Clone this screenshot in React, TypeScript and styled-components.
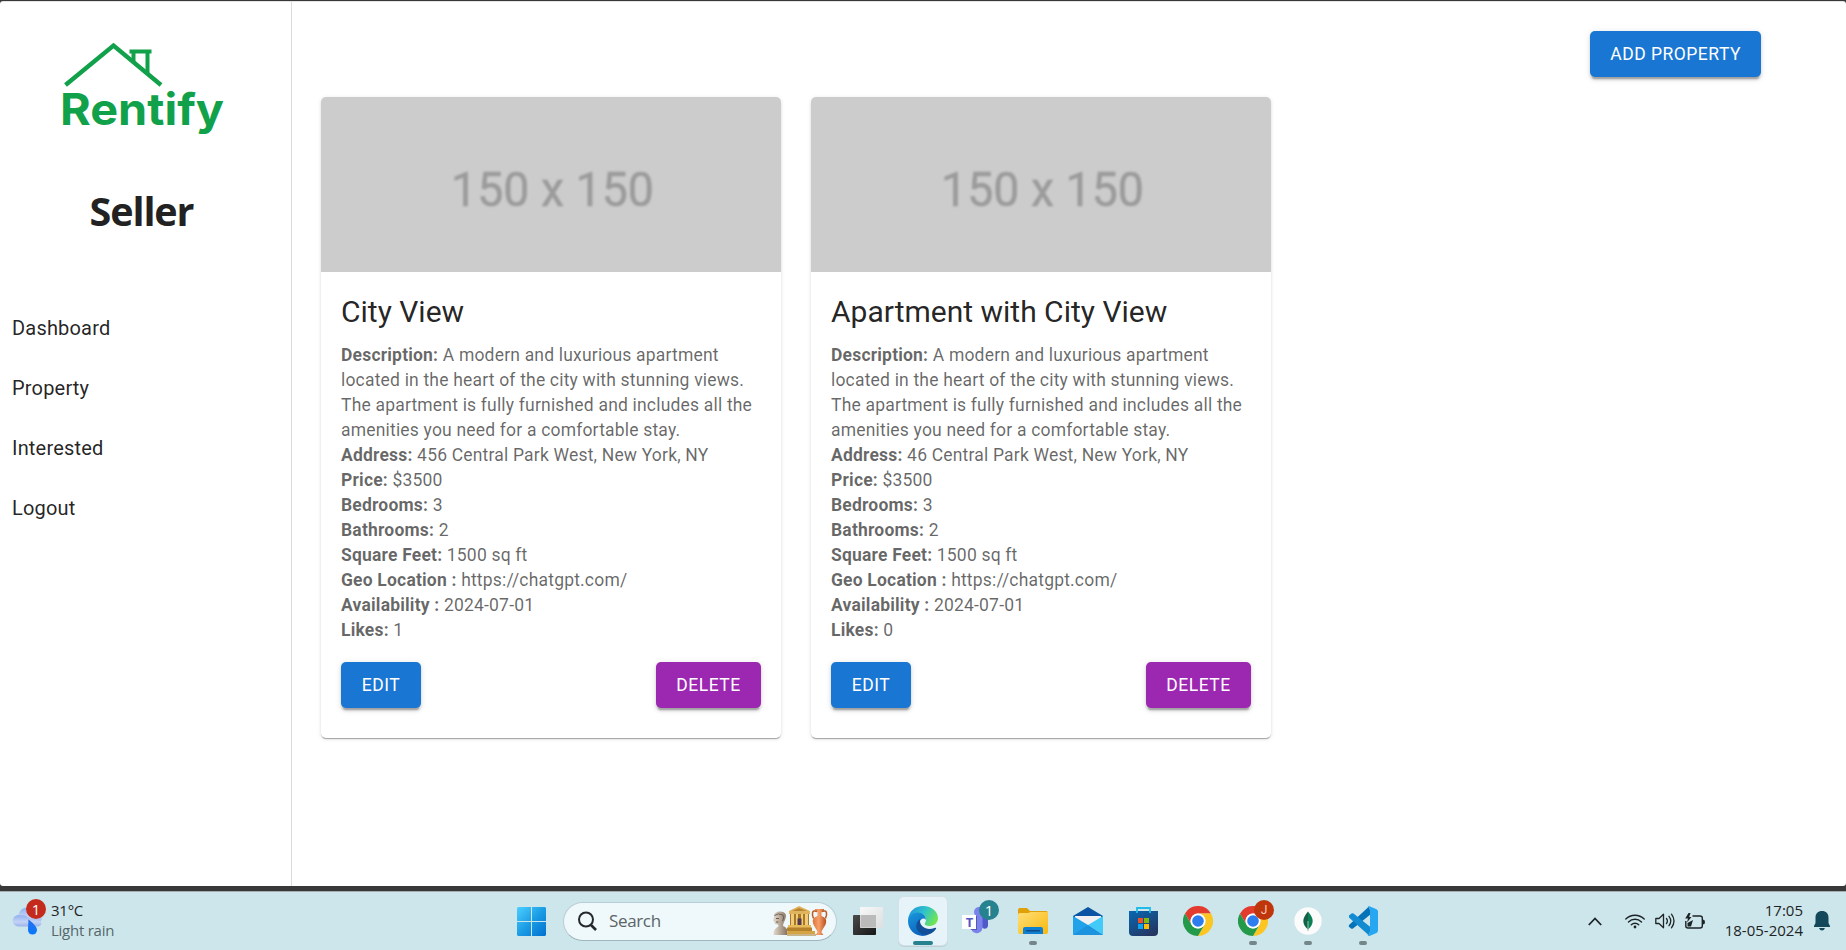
import React from 'react';
import styled, { createGlobalStyle } from 'styled-components';

const GlobalStyle = createGlobalStyle`
  * { box-sizing: border-box; }
  html, body { margin: 0; padding: 0; }
  body {
    width: 1846px;
    height: 950px;
    overflow: hidden;
    background: #383838;
    font-family: Roboto, "Liberation Sans", sans-serif;
    color: rgba(0, 0, 0, 0.87);
  }
`;

const Screen = styled.div`
  display: flex;
  flex-direction: column;
  height: 950px;
  padding-top: 1px;
`;

const Page = styled.div`
  display: flex;
  height: 885px;
  margin-bottom: 5px;
  background: #fff;
  border-top: 1px solid #e6e3e6;
  border-radius: 3px;
  overflow: hidden;
`;

const Sidebar = styled.aside`
  display: flex;
  flex-direction: column;
  width: 292px;
  border-right: 1px solid #dcdcdc;
`;

const Brand = styled.div`
  padding: 38px 0 0 58px;
  height: 138px;
`;

const Role = styled.h1`
  margin: 41px 0 0;
  width: 283px;
  text-align: center;
  font: 700 39.5px/60px "Open Sans", "Noto Sans", sans-serif;
  letter-spacing: -1.1px;
  color: #222;
`;

const Nav = styled.nav`
  display: flex;
  flex-direction: column;
  margin-top: 57px;
`;

const NavItem = styled.a`
  padding: 15px 12px;
  font-size: 20px;
  line-height: 30px;
  letter-spacing: 0.00938em;
`;

const Main = styled.main`
  flex: 1;
  display: flex;
  flex-direction: column;
  padding: 29px 85px 0 29px;
`;

const Toolbar = styled.div`
  display: flex;
  justify-content: flex-end;
  margin-bottom: 20px;
`;

const Button = styled.button<{ $tone?: 'primary' | 'secondary' }>`
  height: 46px;
  min-width: ${(p) => (p.$tone === 'secondary' ? 105 : 80)}px;
  padding: 0 20px;
  border: 0;
  border-radius: 5px;
  background: ${(p) => (p.$tone === 'secondary' ? '#9c27b0' : '#1976d2')};
  color: #fff;
  font: 400 17.5px/30.6px Roboto, sans-serif;
  letter-spacing: 0.02857em;
  text-transform: uppercase;
  white-space: nowrap;
  box-shadow: 0 3.75px 1.25px -2.5px rgba(0, 0, 0, 0.2), 0 2.5px 2.5px rgba(0, 0, 0, 0.14),
    0 1.25px 6.25px rgba(0, 0, 0, 0.12);
`;

const CardList = styled.div`
  display: flex;
  gap: 30px;
`;

const Card = styled.article`
  width: 460px;
  border-radius: 5px;
  overflow: hidden;
  background: #fff;
  box-shadow: 0 2px 1px -1px rgba(0, 0, 0, 0.2), 0 1px 1px rgba(0, 0, 0, 0.14),
    0 1px 4px rgba(0, 0, 0, 0.12);
`;

const CardBody = styled.div`
  padding: 20px 20px 30px;
`;

const CardTitle = styled.h2`
  margin: 0 0 10.5px;
  font-size: 30px;
  line-height: 40px;
  font-weight: 400;
`;

const Details = styled.div`
  font-size: 17.5px;
  line-height: 25.025px;
  letter-spacing: 0.01071em;
  color: rgba(0, 0, 0, 0.6);
`;

const Field = styled.div`
  b { font-weight: 700; }
`;

const Actions = styled.div`
  display: flex;
  justify-content: space-between;
  margin-top: 19px;
`;

const Taskbar = styled.footer`
  display: flex;
  align-items: center;
  height: 59px;
  padding: 0 16px 0 11px;
  border-top: 1px solid #a4aeb1;
  background: #cde6eb;
  font: 400 15px/20px "Open Sans", "Noto Sans", sans-serif;
  color: #1d2426;
`;

const Weather = styled.div`
  display: flex;
  align-items: center;
  gap: 5px;
  width: 496px;
`;

const TwoLines = styled.div<{ $end?: boolean }>`
  display: flex;
  flex-direction: column;
  padding-bottom: 2px;
  text-align: ${(p) => (p.$end ? 'right' : 'left')};
  letter-spacing: ${(p) => (p.$end ? '0' : '-0.25px')};
  white-space: nowrap;
`;

const Muted = styled.span`
  color: #56666a;
`;

const Apps = styled.div`
  display: flex;
  align-items: center;
  gap: 7px;
`;

const Tile = styled.div<{ $active?: boolean }>`
  position: relative;
  display: flex;
  align-items: center;
  justify-content: center;
  width: 48px;
  height: 48px;
  border-radius: 5px;
  background: ${(p) => (p.$active ? '#e6f3f8' : 'transparent')};
  box-shadow: ${(p) => (p.$active ? '0 0 0 1px #d3e2e8, 0 1px 0 1px #bdd0d6' : 'none')};
`;

const Indicator = styled.i<{ $active?: boolean }>`
  position: absolute;
  left: 50%;
  bottom: 0;
  width: ${(p) => (p.$active ? 20 : 8)}px;
  height: 4px;
  transform: translateX(-50%);
  border-radius: 2px;
  background: ${(p) => (p.$active ? '#26828f' : '#75868a')};
`;

const Badge = styled.span<{ $color: string; $left: number; $top: number; $small?: boolean }>`
  position: absolute;
  left: ${(p) => p.$left}px;
  top: ${(p) => p.$top}px;
  width: 20px;
  height: 20px;
  border-radius: 50%;
  background: ${(p) => p.$color};
  color: ${(p) => (p.$small ? '#f6c9b4' : '#fff')};
  font-family: ${(p) => (p.$small ? 'Roboto' : '"Open Sans"')}, sans-serif;
  font-size: ${(p) => (p.$small ? 12 : 15)}px;
  line-height: 20px;
  text-align: center;
`;

const WeatherIcon = styled.div`
  position: relative;
  height: 32px;
  width: 35px;
`;

const SearchBox = styled.div`
  display: flex;
  align-items: center;
  width: 274px;
  height: 39px;
  margin-left: 1px;
  padding: 0 8px 0 14px;
  border: 1px solid #b9ced5;
  border-bottom-color: #9fb6bd;
  border-radius: 20px;
  background: #eff8fa;
  color: #5b6467;
  font-size: 17px;
  letter-spacing: -0.35px;
`;

const SearchLabel = styled.span`
  flex: 1;
  padding-left: 12px;
`;

const Tray = styled.div`
  display: flex;
  align-items: center;
  margin-left: auto;
`;

const TrayIcons = styled.div`
  display: flex;
  align-items: center;
  gap: 10px;
  margin: 0 20px 0 23px;
`;

const Bell = styled.div`
  display: flex;
  margin-left: 11px;
`;

const Logo = () => (
  <svg width="170" height="98" viewBox="58 40 170 98">
    <g fill="none" stroke="#12a14b" strokeWidth="4.4">
      <path d="M65.500 85 113.500 45.500 161 85" />
      <path d="M129.500 51.500H151.500M133.500 52V62M147.500 52V74" strokeWidth="4" />
    </g>
    <text x="60" y="124.500" fill="#12a14b" fontFamily="Inter" fontWeight="700" fontSize="44.500" textLength="164" lengthAdjust="spacingAndGlyphs">Rentify</text>
  </svg>
);

const Placeholder = () => (
  <svg width="460" height="175" viewBox="0 0 460 175" display="block">
    <rect width="460" height="175" fill="#ccc" />
    <text x="130" y="108.500" fill="#9b9b9b" fontFamily="Roboto" fontWeight="400" stroke="#9b9b9b" strokeWidth=".5" fontSize="47.500" textLength="203" lengthAdjust="spacingAndGlyphs" style={{ filter: 'blur(1px)' }}>150 x 150</text>
  </svg>
);

const CloudRain = () => (
  <svg width="32" height="32" viewBox="0 0 32 32">
    <defs>
      <linearGradient id="cloud" x1="0" y1="0" x2="0" y2="1"><stop stopColor="#8fb0f0" /><stop offset=".6" stopColor="#c4d3f6" /><stop offset="1" stopColor="#9bb2ec" /></linearGradient>
      <linearGradient id="drop" x1="0" y1="0" x2="0" y2="1"><stop stopColor="#2a6fe8" /><stop offset="1" stopColor="#0878ff" /></linearGradient>
    </defs>
    <path d="M9 16A8 8 0 0 1 23 6a6 6 0 0 1 4 12z" fill="url(#cloud)" />
    <path d="M7 21.500a5.800 5.800 0 1 1 3-11 8 8 0 0 1 9 4.500h8a4.500 4.500 0 0 1 3.500 3q-.5 3.500-4 3.500z" fill="url(#cloud)" />
    <path d="M17.500 14.500c0 0 8.500 6 8.500 10.500a4.500 4.500 0 0 1-9 0c0-3 .5-10.500.5-10.500z" fill="url(#drop)" />
  </svg>
);

const WindowsIcon = () => (
  <svg width="29" height="29" viewBox="0 0 29 29">
    <defs><linearGradient id="win" x1="0" y1="0" x2="1" y2="1"><stop stopColor="#4dcfff" /><stop offset=".5" stopColor="#1b9de5" /><stop offset="1" stopColor="#0070cf" /></linearGradient></defs>
    <path d="M1 0H14V14H0V1ZM15 0H28L29 1V14H15ZM0 15H14V29H1L0 28ZM15 15H29V28L28 29H15Z" fill="url(#win)" />
  </svg>
);

const SearchIcon = () => (
  <svg width="19" height="20" viewBox="0 0 19 20" fill="none" stroke="#25292b" strokeWidth="2">
    <circle cx="8" cy="8.500" r="7" /><path d="M12.500 13.500 18 19" strokeWidth="2.600" />
  </svg>
);

const Monuments = () => (
  <svg width="56" height="31" viewBox="0 0 56 31">
    <defs>
      <linearGradient id="vase"><stop stopColor="#dd7739" /><stop offset=".45" stopColor="#f7a06c" /><stop offset="1" stopColor="#b84f1c" /></linearGradient>
      <linearGradient id="bust"><stop stopColor="#e6ddd0" /><stop offset="1" stopColor="#85715d" /></linearGradient>
    </defs>
    <path d="M2 11C1 7 5 5.500 8 5.500c5 0 7 3 5.500 7C13 15 11 17 11 20c3 1 5 3 4.500 9H1.500c0-5 2-7 5-8.500L6 18.500 3 18 2.500 16 1 14.500z" fill="url(#bust)" />
    <path d="M2.500 9.500q3.500-3 8.500-.5 1.500 3-.5 6M4 12.500h3M4 16h2.500" stroke="#6b5f55" fill="none" />
    <path d="M27 0 38 5V8H17V5z" fill="#e0b45c" /><path d="M20 5 27 2l8 3z" fill="#b98532" />
    <path d="M18 8H37V19H18z" fill="#a87726" />
    <path d="M19 8h3v11h-3zM24 8h2v11h-2zM29 8h2v11h-2zM33 8h3v11h-3z" fill="#f0cb78" />
    <path d="M25.500 12.500h4V19h-4z" fill="#563a4c" />
    <path d="M16 19h23v3H16z" fill="#e7bb5a" /><path d="M15 21.500h25V25H15z" fill="#b4822b" /><path d="M16 25h27v3H15z" fill="#d6a445" /><path d="M15 28h29v2H15z" fill="#c9b58a" />
    <path d="M43 3h9v1.500l-2.500 1.500V10c3 1 5.500 3 4.500 7-1 4-4.500 7-4.500 9.500l2 2.500h-8l2-2.500C45.500 24 42 21 41 17c-1-4 1.500-6 4.500-7V6L43 4.500z" fill="url(#vase)" />
    <path d="M45 5.500c-5-2-5.500 2-3.500 7M50 5.500c5-2 5.500 2 3.500 7" fill="none" stroke="#bd5a25" strokeWidth="1.500" />
  </svg>
);

const TaskViewIcon = () => (
  <svg width="30" height="29" viewBox="0 0 30 29">
    <defs>
      <linearGradient id="tvd" x1="0" y1="0" x2="1" y2="1"><stop stopColor="#4b4b4b" /><stop offset="1" stopColor="#161616" /></linearGradient>
      <linearGradient id="tvl" x1="0" y1="0" x2="1" y2="1"><stop stopColor="#f8f8f8" /><stop offset="1" stopColor="#dcdedf" /></linearGradient>
    </defs>
    <rect y="8" width="23" height="20" rx="1" fill="url(#tvd)" />
    <rect x="7" y="0" width="23" height="21" rx="1" fill="url(#tvl)" />
    <path d="M7.500 8H23V20.500H7.500z" fill="#bbb" />
  </svg>
);

const EdgeIcon = () => (
  <svg width="30" height="30" viewBox="0 0 30 30">
    <defs>
      <linearGradient id="eg" x1="0" y1=".2" x2="1" y2=".6"><stop stopColor="#2291dc" /><stop offset=".5" stopColor="#2fc3cb" /><stop offset="1" stopColor="#72e650" /></linearGradient>
      <linearGradient id="eb" x1="0" y1="0" x2=".5" y2="1"><stop stopColor="#1a99dc" /><stop offset="1" stopColor="#0c62bd" /></linearGradient>
    </defs>
    <path d="M0 14C1 5 7 0 15 0c9 0 15 6 15 12 0 5-4 8-8 8-4 0-6-1-5-3 2-3 1-7-3-9C9 6 3 9 0 14z" fill="url(#eg)" />
    <path d="M0 15c0-5 5-8.500 9.500-8.500 5 0 8.500 3.500 8.500 7.500-1.500-3-6-1.500-6.500 3C11 23 16 29 21 28.500 11 33 0 26 0 15z" fill="url(#eb)" />
    <path d="M12 13c-4 3-5 8-2 12 4 5 12 6 18-2 .5-1-.5-1.500-1.500-1C19 25 11 21 12 13z" fill="#124f99" />
  </svg>
);

const TeamsIcon = () => (
  <svg width="34" height="32" viewBox="0 0 34 32">
    <circle cx="18" cy="7" r="5" fill="#7b83eb" />
    <path d="M20 12h7v8c0 5-6 5-7 0z" fill="#5059c9" />
    <path d="M11 11h10.500v12a6 6 0 0 1-10.500 3z" fill="#7b83eb" />
    <path d="M4 11h12v14H10z" fill="#484ea9" opacity=".8" />
    <rect x="1" y="10" width="14" height="14" fill="#fff" />
    <text x="8.500" y="21.500" fill="#5558c4" fontFamily="Open Sans" fontWeight="700" fontSize="13" textAnchor="middle">T</text>
  </svg>
);

const FolderIcon = () => (
  <svg width="30" height="27" viewBox="0 0 30 27">
    <defs><linearGradient id="fold" x1="0" y1="0" x2="1" y2="1"><stop stopColor="#ffdf79" /><stop offset="1" stopColor="#f9b80c" /></linearGradient></defs>
    <path d="M0 2Q0 0 2 0H9L12 3H28q2 0 2 2V8H0z" fill="#dfa009" />
    <path d="M0 7Q0 5 2 5H10L13 4H30V24q0 2-2 2H2q-2 0-2-2z" fill="url(#fold)" />
    <path d="M5 26V21q0-2 2-2H23q2 0 2 2v5z" fill="#0f7fd2" /><rect x="8" y="22" width="14" height="1.500" rx=".7" fill="#104c83" />
  </svg>
);

const MailIcon = () => (
  <svg width="30" height="28" viewBox="0 0 30 28">
    <path d="M0 9 15 0 30 9V14H0z" fill="#0b54a4" />
    <path d="M2 9H28V20H2z" fill="#f1f1f3" />
    <path d="M0 9 15 18 30 28H1q-1 0-1-1z" fill="#22a2e8" />
    <path d="M30 9 15 18 30 28z" fill="#42caf8" />
    <path d="M0 28 15 18 30 28z" fill="#1b93de" />
  </svg>
);

const StoreIcon = () => (
  <svg width="29" height="29" viewBox="0 0 29 29">
    <defs><linearGradient id="store" x1="0" y1="0" x2=".7" y2="1"><stop stopColor="#0768b4" /><stop offset="1" stopColor="#253661" /></linearGradient></defs>
    <path d="M0 4H29V25q0 4-4 4H4q-4 0-4-4z" fill="url(#store)" />
    <path d="M8 6V1H21V6" fill="none" stroke="#20bbe8" strokeWidth="1.800" />
    <path d="M9 11h5v5H9z" fill="#f05126" /><path d="M15 11h5v5h-5z" fill="#7fba10" /><path d="M9 17h5v5H9z" fill="#08a6ef" /><path d="M15 17h5v5h-5z" fill="#ffba08" />
  </svg>
);

const ChromeIcon = () => (
  <svg width="30" height="30" viewBox="0 0 30 30">
    <path d="M2 7.500A15 15 0 0 1 28 7.500H15A7.500 7.500 0 0 0 8.500 18.750z" fill="#e33b2e" />
    <path d="M28 7.500A15 15 0 0 1 15 30L21.500 18.750A7.500 7.500 0 0 0 15 7.500z" fill="#fcc521" />
    <path d="M2 7.500A15 15 0 0 0 15 30L21.500 18.750A7.500 7.500 0 0 1 8.500 18.750z" fill="#239a49" />
    <circle cx="15" cy="15" r="7.500" fill="#fff" /><circle cx="15" cy="15" r="5.800" fill="#2d7df0" />
  </svg>
);

const CompassIcon = () => (
  <svg width="28" height="28" viewBox="0 0 28 28">
    <circle cx="14" cy="14" r="13.700" fill="#fbfbfb" />
    <path d="M14 4.500C7.500 12 8 17 14 22.500z" fill="#116149" /><path d="M14 4.500C20.500 12 20 17 14 22.500z" fill="#0b7f54" /><path d="M13.500 14h1v10h-1z" fill="#8fc7af" />
  </svg>
);

const CodeIcon = () => (
  <svg width="30" height="30" viewBox="0 0 30 30">
    <path d="M1 19 21 .5 23 8 5 22.500q-1 .6-2 0L.7 20.500z" fill="#0672b8" />
    <path d="M1 9.500 3.500 7.500q1-.5 2 0L23 21.500 21 29.500 1 11.500z" fill="#138bd2" />
    <path d="M22 .5q-1.500-.7-2.500.7Q22 1 22 4V26q0 2.500-2.500 2.700 1 1.700 2.500 1L28.500 27q1.500-.8 1.500-2.500V5.500Q30 4 28.500 3.300z" fill="#27a6f1" />
  </svg>
);

const WifiIcon = () => (
  <svg width="20" height="15" viewBox="0 0 20 15" fill="none" stroke="#1d2426" strokeWidth="1.400" strokeLinecap="round">
    <path d="M.8 5A13 13 0 0 1 19.200 5M3.500 8a9.200 9.200 0 0 1 13 0M6.300 10.700a5.300 5.300 0 0 1 7.400 0" /><circle cx="10" cy="13" r="1.400" fill="#1d2426" stroke="none" />
  </svg>
);

const VolumeIcon = () => (
  <svg width="20" height="16" viewBox="0 0 20 16" fill="none" stroke="#1d2426" strokeWidth="1.300" strokeLinecap="round" strokeLinejoin="round">
    <path d="M.8 5.500H4L8.500 1.200V14.800L4 10.500H.8zM11.500 5.500q1.800 2.500 0 5M14 3.300q3.500 4.700 0 9.400M16.500 1.200q5 6.800 0 13.600" />
  </svg>
);

const BatteryIcon = () => (
  <svg width="20" height="16" viewBox="0 0 20 16">
    <path d="M7.500 3H15q2.300 0 2.300 2V13q0 2-2.300 2H3Q.8 15 .8 13V8" fill="none" stroke="#1d2426" strokeWidth="1.400" />
    <path d="M18 6.500q2 0 2 2.500t-2 2.500zM3.500 0 .2 5.500H3L2 9.500 6.500 4H4.200L5.500 0zM2.500 13.500V10L8 7 6 13.500z" fill="#1d2426" />
  </svg>
);

const properties = [
  { title: 'City View', address: '456 Central Park West, New York, NY', likes: 1 },
  { title: 'Apartment with City View', address: '46 Central Park West, New York, NY', likes: 0 },
];

const description =
  'A modern and luxurious apartment located in the heart of the city with stunning views. The apartment is fully furnished and includes all the amenities you need for a comfortable stay.';

const PropertyCard = ({ title, address, likes }: (typeof properties)[number]) => {
  const fields: [string, string | number][] = [
    ['Description:', description],
    ['Address:', address],
    ['Price:', '$3500'],
    ['Bedrooms:', 3],
    ['Bathrooms:', 2],
    ['Square Feet:', '1500 sq ft'],
    ['Geo Location :', 'https://chatgpt.com/'],
    ['Availability :', '2024-07-01'],
    ['Likes:', likes],
  ];
  return (
    <Card>
      <Placeholder />
      <CardBody>
        <CardTitle>{title}</CardTitle>
        <Details>
          {fields.map(([label, value]) => (
            <Field key={label}><b>{label}</b> {value}</Field>
          ))}
        </Details>
        <Actions>
          <Button>Edit</Button>
          <Button $tone="secondary">Delete</Button>
        </Actions>
      </CardBody>
    </Card>
  );
};

export default function App() {
  return (
    <Screen>
      <GlobalStyle />
      <Page>
        <Sidebar>
          <Brand><Logo /></Brand>
          <Role>Seller</Role>
          <Nav>
            {['Dashboard', 'Property', 'Interested', 'Logout'].map((item) => (
              <NavItem key={item}>{item}</NavItem>
            ))}
          </Nav>
        </Sidebar>
        <Main>
          <Toolbar><Button>Add Property</Button></Toolbar>
          <CardList>
            {properties.map((p) => <PropertyCard key={p.title} {...p} />)}
          </CardList>
        </Main>
      </Page>
      <Taskbar>
        <Weather>
          <WeatherIcon><CloudRain /><Badge $color="#c42b1c" $left={15} $top={-6}>1</Badge></WeatherIcon>
          <TwoLines><span>31°C</span><Muted>Light rain</Muted></TwoLines>
        </Weather>
        <Apps>
          <Tile><WindowsIcon /></Tile>
          <SearchBox><SearchIcon /><SearchLabel>Search</SearchLabel><Monuments /></SearchBox>
          <Tile><TaskViewIcon /></Tile>
          <Tile $active><EdgeIcon /><Indicator $active /></Tile>
          <Tile><TeamsIcon /><Badge $color="#26828f" $left={25} $top={3}>1</Badge></Tile>
          <Tile><FolderIcon /><Indicator /></Tile>
          <Tile><MailIcon /></Tile>
          <Tile><StoreIcon /></Tile>
          <Tile><ChromeIcon /></Tile>
          <Tile><ChromeIcon /><Badge $color="#bf360c" $left={25} $top={3} $small>J</Badge><Indicator /></Tile>
          <Tile><CompassIcon /><Indicator /></Tile>
          <Tile><CodeIcon /><Indicator /></Tile>
        </Apps>
        <Tray>
          <svg width="14" height="9" viewBox="0 0 14 9" fill="none" stroke="#1d2426" strokeWidth="1.800"><path d="M.8 8 7 1.500 13.200 8" /></svg>
          <TrayIcons><WifiIcon /><VolumeIcon /><BatteryIcon /></TrayIcons>
          <TwoLines $end><span>17:05</span><span>18-05-2024</span></TwoLines>
          <Bell>
            <svg width="16" height="20" viewBox="0 0 16 20" fill="#12485a"><path d="M8 0c4 0 6.500 2.500 6.500 6.500V12L16 15v1H0v-1l1.500-3V6.500C1.500 2.500 4 0 8 0zM5 17h6q-1 2.500-3 2.500T5 17z" /></svg>
          </Bell>
        </Tray>
      </Taskbar>
    </Screen>
  );
}
